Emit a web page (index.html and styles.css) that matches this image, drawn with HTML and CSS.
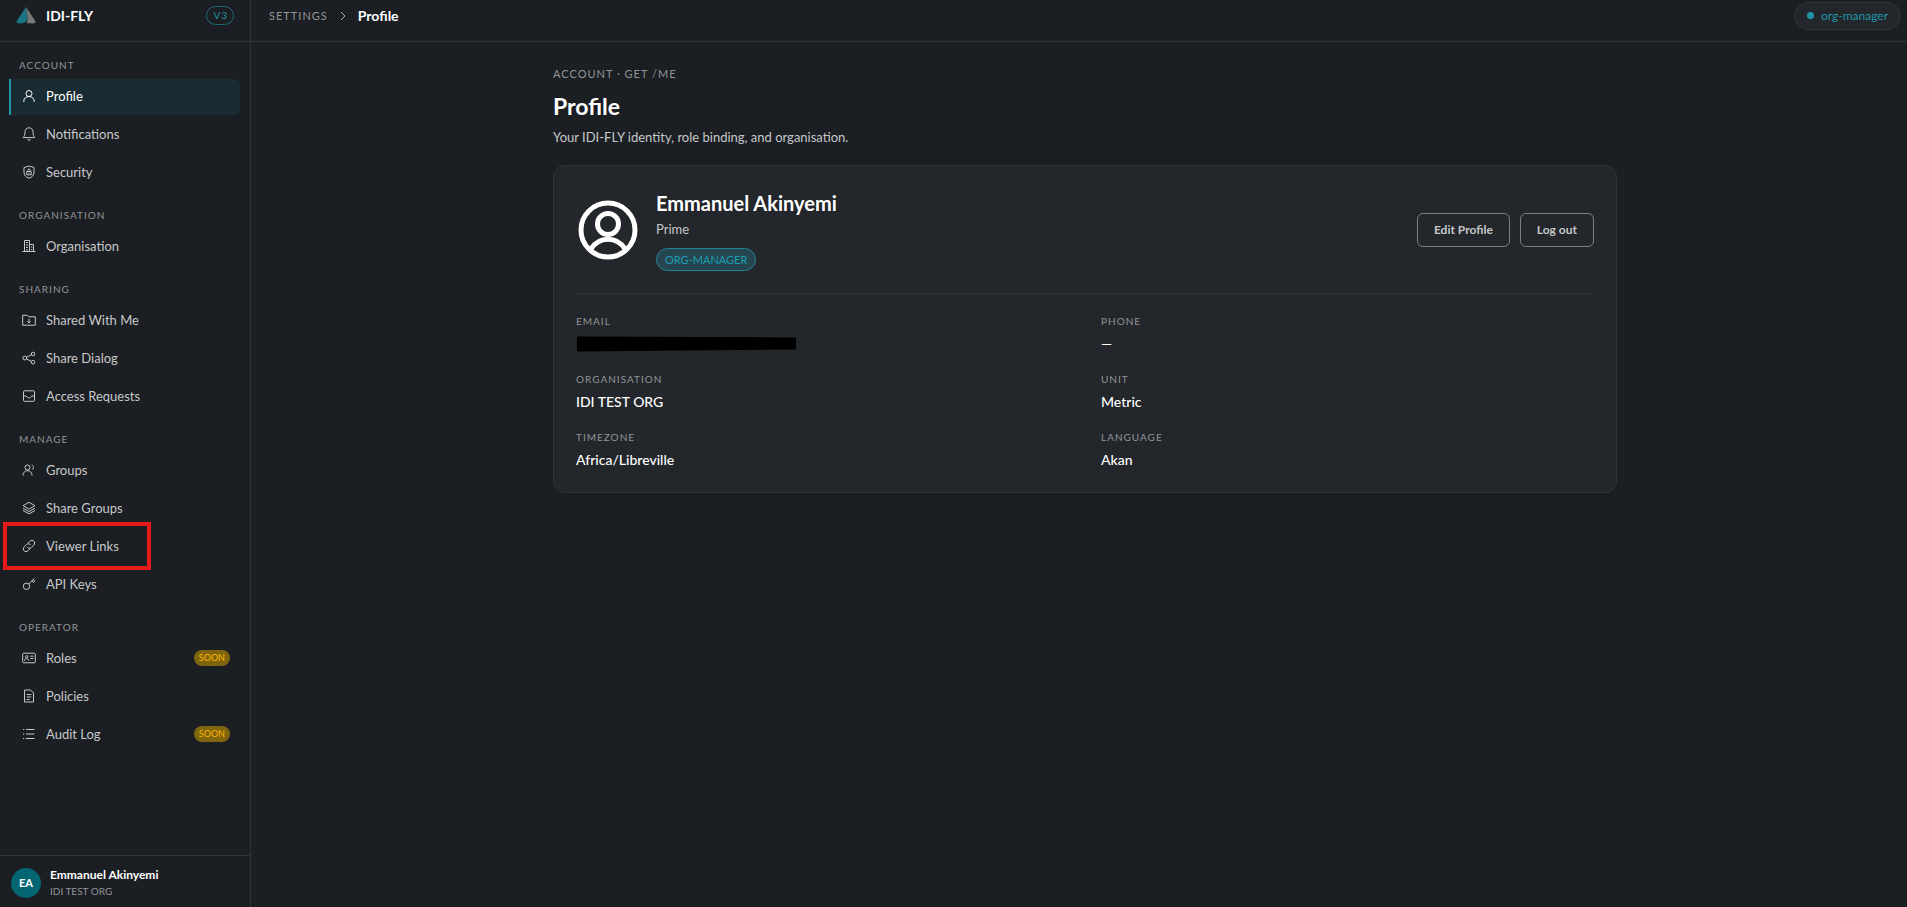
FILE: index.html
```html
<!DOCTYPE html>
<html lang="en">
<head>
    <meta charset="UTF-8">
    <meta name="viewport" content="width=device-width, initial-scale=1.0">
    <title>IDI-FLY - Profile</title>
    <link rel="stylesheet" href="styles.css">
</head>
<body>
    <aside class="sidebar">
        <div class="brand">
            <svg class="logo" viewBox="0 0 20 17">
                <path d="M10 0 L1 13.500 Q-0.500 16.500 3 16.500 L7.500 16 Q10 15.500 11.500 12.500 Z" fill="#1b7583"/>
                <path d="M10 0 L11.800 12.500 Q11 15 10.500 16 L17 16.500 Q20.500 16.500 19 13.500 Z" fill="#77797d"/>
            </svg>
            <span class="brand-name">IDI-FLY</span>
            <span class="version">V3</span>
        </div>
        <nav class="menu">
            <section class="menu-group">
                <h2>Account</h2>
                <a href="#" class="active">
                    <svg class="icon" viewBox="0 0 14 14"><circle cx="7" cy="4.500" r="3"/><path d="M1.800 13v-.800C1.800 9.500 4 7.500 7 7.500s5.200 2 5.200 4.700v.8"/></svg>
                    Profile
                </a>
                <a href="#">
                    <svg class="icon" viewBox="0 0 14 14"><path d="M7 .8C4.600.8 3 2.500 3 4.800c0 3.400-.8 4.300-1.800 5.800h11.600C11.800 9.100 11 8.200 11 4.800 11 2.500 9.400.8 7 .8zM5.500 12.200c.3 1.400 2.700 1.400 3 0"/></svg>
                    Notifications
                </a>
                <a href="#">
                    <svg class="icon" viewBox="0 0 14 14"><path d="M7 1l5 1.500V7c0 3.400-2 5.300-5 6.200C4 12.300 2 10.400 2 7V2.500z"/><path d="M4.800 6.500h4.400v3.300H4.800zM5.700 6.500V5.300c0-1.700 2.600-1.700 2.600 0v1.200M7 7.600v1.200"/></svg>
                    Security
                </a>
            </section>
            <section class="menu-group">
                <h2>Organisation</h2>
                <a href="#">
                    <svg class="icon" viewBox="0 0 14 14"><path d="M.5 12.500h13M2.500 12.500v-11h5v11M7.500 5.500h4v7"/><path d="M4 3.500h2M4 6h2M4 8.500h2M4 11h2M9 8h1.300M9 10.500h1.300"/></svg>
                    Organisation
                </a>
            </section>
            <section class="menu-group">
                <h2>Sharing</h2>
                <a href="#">
                    <svg class="icon" viewBox="0 0 14 14"><path d="M.7 2.300h4.500l1.500 1.500h6.600v8.400H.7zM7 5.800v4M5.300 8.300L7 10l1.700-1.700"/></svg>
                    Shared With Me
                </a>
                <a href="#">
                    <svg class="icon" viewBox="0 0 14 14"><circle cx="2.800" cy="7" r="1.900"/><circle cx="11" cy="3" r="1.800"/><circle cx="11" cy="11.200" r="1.800"/><path d="M4.500 6.200l4.800-2.400M4.500 7.900l4.800 2.500"/></svg>
                    Share Dialog
                </a>
                <a href="#">
                    <svg class="icon" viewBox="0 0 14 14"><rect x="1.500" y="1.800" width="11" height="10.500" rx="1"/><path d="M1.500 7h2.800c.8 2.600 4.600 2.600 5.400 0h2.800"/></svg>
                    Access Requests
                </a>
            </section>
            <section class="menu-group">
                <h2>Manage</h2>
                <a href="#">
                    <svg class="icon" viewBox="0 0 14 14"><circle cx="5.500" cy="4.500" r="2.500"/><path d="M1 12.500c0-3 1.800-4.800 4.500-4.800s4.500 1.800 4.500 4.800M9.800 2c2.200.6 2.200 3.600.3 4.600"/></svg>
                    Groups
                </a>
                <a href="#">
                    <svg class="icon" viewBox="0 0 14 14"><path d="M7 1.300l6 3.400-6 3.400-6-3.400zM1 7.200l6 3.300 6-3.300M1 9.500l6 3.300 6-3.300"/></svg>
                    Share Groups
                </a>
                <a href="#" class="marked">
                    <svg class="icon" viewBox="0 0 14 14"><path d="M5.800 4.300l2-2c2.800-2.700 6.600 1 3.900 3.900L9.500 8.400c-1.500 1.300-3.400 1-4.300-.5M8.200 9.700l-2 2c-2.800 2.700-6.600-1-3.900-3.900l2.200-2.200c1.500-1.300 3.400-1 4.300.5"/></svg>
                    Viewer Links
                </a>
                <a href="#">
                    <svg class="icon" viewBox="0 0 14 14"><circle cx="4.500" cy="9.300" r="3.200"/><path d="M6.800 7l5.700-5.700M9.800 4l1.800 1.500 1.200-1.300-1.600-1.700"/></svg>
                    API Keys
                </a>
            </section>
            <section class="menu-group">
                <h2>Operator</h2>
                <a href="#">
                    <svg class="icon" viewBox="0 0 14 14"><rect x=".7" y="2.200" width="12.600" height="9.600" rx="1"/><circle cx="4.700" cy="5.800" r="1.200"/><path d="M2.500 9.800c.2-2.800 4.200-2.800 4.400 0M8.300 5.200h3.200M8.300 7.500h3.200"/></svg>
                    Roles
                    <span class="soon">SOON</span>
                </a>
                <a href="#">
                    <svg class="icon" viewBox="0 0 14 14"><path d="M2.500 1h6l3 3v9h-9zM4.700 5.500h4.600M4.700 8h4.600M4.700 10.500h3"/></svg>
                    Policies
                </a>
                <a href="#">
                    <svg class="icon" viewBox="0 0 14 14"><path d="M4 2.500h8.500M4 7h8.500M4 11.500h8.500M1 2.500h1.300M1 7h1.300M1 11.500h1.300"/></svg>
                    Audit Log
                    <span class="soon">SOON</span>
                </a>
            </section>
        </nav>
        <div class="user">
            <span class="initials">EA</span>
            <div>
                <div class="user-name">Emmanuel Akinyemi</div>
                <div class="user-org">IDI TEST ORG</div>
            </div>
        </div>
    </aside>
    <div class="page">
        <header class="topbar">
            <a href="#" class="crumb">Settings</a>
            <svg class="chevron" viewBox="0 0 8 10"><path d="M2 1l4 4-4 4"/></svg>
            <span class="current">Profile</span>
            <span class="role-pill">org-manager</span>
        </header>
        <main class="content">
            <p class="eyebrow">ACCOUNT · GET /ME</p>
            <h1>Profile</h1>
            <p class="intro">Your IDI-FLY identity, role binding, and organisation.</p>
            <div class="card">
                <div class="card-head">
                    <svg class="avatar" viewBox="-2 -2 64 64">
                        <circle cx="30" cy="30" r="27"/>
                        <circle cx="30" cy="24" r="10.500"/>
                        <path d="M13 49c8-13 26-13 34 0"/>
                    </svg>
                    <div class="identity">
                        <h2>Emmanuel Akinyemi</h2>
                        <p>Prime</p>
                        <span class="badge">ORG-MANAGER</span>
                    </div>
                    <div class="actions">
                        <button type="button">Edit Profile</button>
                        <button type="button">Log out</button>
                    </div>
                </div>
                <dl class="details">
                    <div>
                        <dt>Email</dt>
                        <dd><svg class="redacted" viewBox="0 0 220 15"><path d="M1 0L220 1V13L1 15z"/></svg></dd>
                    </div>
                    <div>
                        <dt>Phone</dt>
                        <dd>—</dd>
                    </div>
                    <div>
                        <dt>Organisation</dt>
                        <dd>IDI TEST ORG</dd>
                    </div>
                    <div>
                        <dt>Unit</dt>
                        <dd>Metric</dd>
                    </div>
                    <div>
                        <dt>Timezone</dt>
                        <dd>Africa/Libreville</dd>
                    </div>
                    <div>
                        <dt>Language</dt>
                        <dd>Akan</dd>
                    </div>
                </dl>
            </div>
        </main>
    </div>
</body>
</html>
```
FILE: styles.css
```css
* {
    box-sizing: border-box;
}
body {
    font-family: Lato, sans-serif;
    display: flex;
    min-height: 100vh;
    margin: 0;
    background-color: #1b1e22;
    color: #fff;
    font-size: 13px;
}
h1, h2, p, dl, dd {
    margin: 0;
}
a {
    color: inherit;
    text-decoration: none;
}

/* sidebar */
.sidebar {
    flex: none;
    width: 251px;
    display: flex;
    flex-direction: column;
    border-right: 1px solid #303338;
}
.brand {
    display: flex;
    align-items: center;
    height: 42px;
    padding: 0 16px 10px;
    border-bottom: 1px solid #303338;
}
.logo {
    width: 20px;
    height: 17px;
    margin-right: 10px;
}
.brand-name {
    font-size: 14px;
    font-weight: 700;
}
.version {
    margin-left: auto;
    padding: 0 5px 0 6px;
    border: 1px solid #1f6873;
    border-radius: 10px;
    color: #2196a8;
    font-size: 10px;
    line-height: 17px;
    letter-spacing: 1px;
}
.menu {
    flex: 1;
    padding: 16px 10px 0 9px;
}
.menu-group {
    display: flex;
    flex-direction: column;
    gap: 2px;
    margin-bottom: 17px;
}
.menu-group h2 {
    margin: 0 10px 5px;
    color: #92959a;
    font-size: 10px;
    font-weight: 400;
    line-height: 14px;
    letter-spacing: 1px;
    text-transform: uppercase;
}
.menu-group a {
    position: relative;
    display: flex;
    align-items: center;
    height: 36px;
    padding: 0 10px 2px 11px;
    border-left: 2px solid transparent;
    color: #c6c8ca;
}
.menu-group a:hover {
    color: #fff;
}
.menu-group .active {
    border-left-color: #1f96a6;
    border-radius: 0 6px 6px 0;
    background-color: #1a2c33;
    color: #fff;
}
.icon {
    width: 14px;
    height: 14px;
    margin-right: 10px;
    fill: none;
    stroke: currentColor;
    stroke-width: 1;
}
.marked::after {
    content: "";
    position: absolute;
    top: -7px;
    left: -8px;
    box-sizing: border-box;
    width: 148px;
    height: 48px;
    border: 4px solid #e81a1a;
}
.soon {
    margin-left: auto;
    padding: 0 5px;
    border-radius: 8px;
    background-color: #80650f;
    color: #ffb400;
    font-size: 9px;
    line-height: 16px;
}
.user {
    display: flex;
    align-items: center;
    gap: 9px;
    height: 52px;
    padding: 3px 11px 0;
    border-top: 1px solid #303338;
}
.initials {
    width: 30px;
    height: 30px;
    border-radius: 50%;
    background-color: #046673;
    font-size: 11px;
    font-weight: 700;
    line-height: 30px;
    text-align: center;
}
.user-name {
    font-size: 12px;
    font-weight: 700;
    line-height: 16px;
}
.user-org {
    color: #92959a;
    font-size: 10px;
    line-height: 16px;
}

/* top bar */
.page {
    flex: 1;
    min-width: 0;
}
.topbar {
    display: flex;
    align-items: center;
    height: 42px;
    padding: 0 6px 10px 18px;
    border-bottom: 1px solid #303338;
}
.crumb {
    color: #92959a;
    font-size: 11px;
    letter-spacing: 1px;
    text-transform: uppercase;
}
.chevron {
    width: 8px;
    height: 10px;
    margin: 0 11px;
    fill: none;
    stroke: #aaacb0;
}
.current {
    font-size: 14px;
    font-weight: 700;
}
.role-pill {
    display: flex;
    align-items: center;
    gap: 7px;
    margin-left: auto;
    padding: 0 12px;
    border: 1px solid #303338;
    border-radius: 14px;
    background-color: #23262a;
    color: #2196a8;
    font-size: 12px;
    line-height: 26px;
}
.role-pill::before {
    content: "";
    width: 7px;
    height: 7px;
    border-radius: 50%;
    background-color: #2196a8;
}

/* profile */
.content {
    max-width: 1076px;
    margin: 0 auto;
    padding: 24px 0 0 12px;
}
.eyebrow {
    color: #92959a;
    font-size: 11px;
    line-height: 16px;
    letter-spacing: 1px;
}
h1 {
    margin-top: 8px;
    font-size: 23px;
    line-height: 32px;
}
.intro {
    margin: 5px 0 18px;
    color: #c6c8ca;
    line-height: 20px;
}
.card {
    padding: 22px;
    border: 1px solid #303338;
    border-radius: 12px;
    background-color: #23262a;
}
.card-head {
    display: flex;
    align-items: center;
    padding-bottom: 22px;
    border-bottom: 1px solid #303338;
}
.avatar {
    width: 64px;
    height: 64px;
    margin-right: 16px;
    fill: none;
    stroke: #fff;
    stroke-width: 5;
}
.identity h2 {
    font-size: 20px;
    line-height: 30px;
}
.identity p {
    color: #c6c8ca;
    line-height: 22px;
}
.badge {
    display: inline-block;
    margin-top: 8px;
    padding: 0 8px;
    border: 1px solid #268594;
    border-radius: 12px;
    background-color: #25464f;
    color: #1f9db2;
    font-size: 11px;
    line-height: 21px;
}
.actions {
    display: flex;
    gap: 10px;
    margin-left: auto;
}
.actions button {
    height: 34px;
    padding: 0 16px;
    border: 1px solid #7b7e83;
    border-radius: 6px;
    background-color: transparent;
    color: #c6c8ca;
    font-family: inherit;
    font-size: 12px;
    font-weight: 700;
    cursor: pointer;
}
.actions button:hover {
    color: #fff;
}
.details {
    display: grid;
    grid-template-columns: 1fr 1fr;
    gap: 17px 32px;
    padding-top: 19px;
}
.details dt {
    color: #92959a;
    font-size: 10px;
    line-height: 16px;
    letter-spacing: 1px;
    text-transform: uppercase;
}
.details dd {
    margin-top: 5px;
    font-size: 14px;
    font-weight: 500;
    line-height: 20px;
}
.redacted {
    display: block;
    width: 220px;
    height: 20px;
}
```
